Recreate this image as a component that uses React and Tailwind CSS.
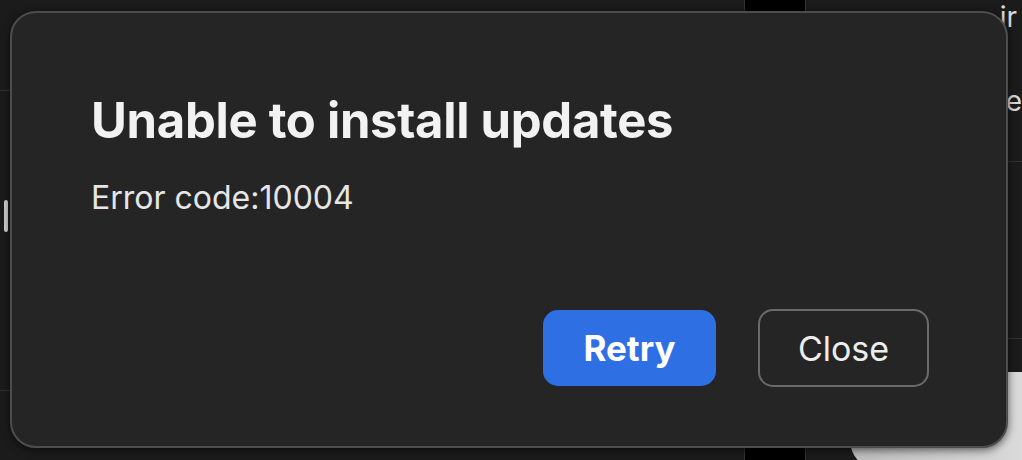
export default function App() {
  return (
    <div
      className="relative w-[1022px] h-[460px] overflow-hidden bg-[#1b1b1b]"
      style={{ fontFamily: 'Inter, "Noto Sans", sans-serif' }}
    >
      {/* app window behind the dialog */}
      <div className="flex h-full">
        <div className="w-[744px] flex flex-col">
          <div className="mt-[90px] h-[301px] border-y border-[#323232] pl-[4px] pt-[109px]">
            <div className="w-[4px] h-[32px] rounded-sm bg-[#cfcfcf]" />
          </div>
        </div>
        <div className="w-[62px] bg-black border-x border-[#333]" />
        <div className="flex-1 flex flex-col">
          <div className="pl-[194px] pt-[3px] text-[28px] leading-none text-[#d8d8d8]">ir</div>
          <div className="pl-[200px] pt-[56px] text-[28px] leading-none text-[#d8d8d8]">e</div>
          <div className="mt-[46px] h-[178px] border-y border-[#323232]" />
          <div className="mt-auto ml-[44px] h-[98px] -mb-[10px] rounded-bl-[30px] bg-gradient-to-r from-[#bdbdbd] to-[#dadada]" />
        </div>
      </div>

      {/* dialog */}
      <div className="absolute left-[10px] top-[11px] w-[998px] h-[437px] rounded-[26px] border-2 border-[#4d4d4d] bg-[#252525] shadow-[0_2px_8px_rgba(0,0,0,0.6)] flex flex-col pl-[79px] pr-[77px] pt-[83px] pb-[59px]">
        <h1 className="text-[49px] font-bold text-[#f2f2f2] leading-none tracking-[-0.3px]">
          Unable to install updates
        </h1>
        <p className="mt-[37px] text-[32px] text-[#e6e6e6] leading-none">Error code:10004</p>
        <div className="mt-auto flex items-center justify-end gap-[42px]">
          <button className="w-[173px] h-[76px] rounded-[15px] bg-[#2f6fe4] text-white text-[35px] font-bold">
            Retry
          </button>
          <button className="w-[171px] h-[78px] rounded-[15px] border-2 border-[#6a6a6a] text-[#ededed] text-[34px]">
            Close
          </button>
        </div>
      </div>
    </div>
  )
}
